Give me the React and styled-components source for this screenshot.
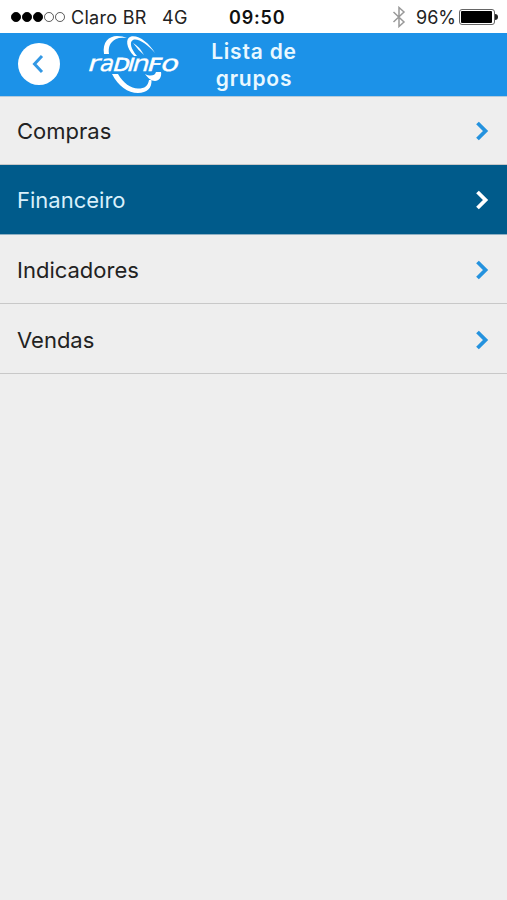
import styled, { createGlobalStyle } from "styled-components";

const groups = [
  { name: "Compras" },
  { name: "Financeiro", active: true },
  { name: "Indicadores" },
  { name: "Vendas" },
];

// the wordmark mixes small and capital letters of one height
const letters = [
  { char: "r", x: 0, width: 12 },
  { char: "a", x: 12, width: 14 },
  { char: "D", x: 25.5, width: 16, cap: true },
  { char: "I", x: 40, width: 6, cap: true },
  { char: "n", x: 44.5, width: 17 },
  { char: "F", x: 60, width: 13.5, cap: true },
  { char: "o", x: 73, width: 18 },
];

const Logo = () => (
  <LogoSvg viewBox="0 0 105 63" aria-label="radinfo">
    <g fill="#fff">
      <path d="M24 21 C22 9 29 3 37 3 Q43 3 47 5 Q40 4 36 6 C30 9 28 14 29 21 Z" />
      <path d="M54 23 C46 15 45 5 51 3.5 C59 2 69 10 75 20 C67 11 58 5 53 7 C49 9 51 16 57 23 Z" />
      <path d="M53 10 Q59 13 64 22 Q58 17 53 10 Z" />
      <path d="M32 41 L38 41 C43 50 51 55.500 58 55.500 C65 55.500 68 53 69 47 L71.500 47 C72 55 67 60 58 60 C48 60 38 53 32 41 Z" />
      <path d="M65 41 C70 43.500 75 43 76 39 L81 39 C82 44 79 48 75 48 C71 48 68 45 65 41 Z" />
    </g>
    <g transform="translate(6.500 38) skewX(-16)">
      {letters.map(({ char, x, width, cap }) => (
        <LogoText
          key={char}
          x={x}
          y="0"
          $cap={cap}
          textLength={width}
          lengthAdjust="spacingAndGlyphs"
        >
          {char}
        </LogoText>
      ))}
    </g>
  </LogoSvg>
);

const Chevron = () => (
  <svg width="16" height="22" viewBox="0 0 16 22" fill="none">
    <path d="M3.500 3 L11.500 11 L3.500 19" stroke="currentColor" strokeWidth="3.800" />
  </svg>
);

const App = () => {
  return (
    <Screen>
      <GlobalStyle />
      <StatusBar>
        <Signal>
          <Dot $full />
          <Dot $full />
          <Dot $full />
          <Dot />
          <Dot />
        </Signal>
        <Carrier>Claro BR</Carrier>
        <Network>4G</Network>
        <Clock>09:50</Clock>
        <Bluetooth viewBox="0 0 14 22">
          <path d="M1.500 6 L12 16 L7 20.500 V1.500 L12 6 L1.500 16" />
        </Bluetooth>
        <Percent>96%</Percent>
        <Battery>
          <Charge />
        </Battery>
      </StatusBar>
      <Header>
        <BackButton aria-label="Voltar">
          <svg width="14" height="20" viewBox="0 0 14 20" fill="none">
            <path d="M11 2 L3.500 10 L11 18" stroke="currentColor" strokeWidth="3" />
          </svg>
        </BackButton>
        <Logo />
        <Title>Lista de grupos</Title>
      </Header>
      <List>
        {groups.map((group) => (
          <Row key={group.name} $active={group.active}>
            <RowName>{group.name}</RowName>
            <Arrow $active={group.active}>
              <Chevron />
            </Arrow>
          </Row>
        ))}
      </List>
    </Screen>
  );
};

export default App;

const GlobalStyle = createGlobalStyle`
  * {
    box-sizing: border-box;
  }
  body {
    margin: 0;
    background: #eeeeee;
    font-family: Inter, "Liberation Sans", sans-serif;
  }
`;

const Screen = styled.div`
  width: 100%;
  min-height: 100vh;
  background: #eeeeee;
`;

const StatusBar = styled.div`
  display: flex;
  align-items: center;
  height: 33px;
  padding: 1px 9px 0 11px;
  background: #fff;
  color: #222;
  font-size: 18px;
  white-space: nowrap;
`;

const Signal = styled.div`
  display: flex;
  gap: 1.2px;
  width: 60px;
`;

const Dot = styled.span`
  width: 9.8px;
  height: 9.8px;
  border-radius: 50%;
  border: 1px solid ${({ $full }) => ($full ? "#000" : "#555")};
  background: ${({ $full }) => ($full ? "#000" : "transparent")};
`;

const Carrier = styled.span`
  width: 91px;
  letter-spacing: 0.3px;
`;

const Network = styled.span`
  width: 67px;
  letter-spacing: 0.3px;
`;

const Clock = styled.span`
  color: #111;
  font-weight: 600;
  letter-spacing: 0.8px;
`;

const Bluetooth = styled.svg`
  width: 14px;
  height: 22px;
  margin-left: auto;
  margin-right: 10px;
  fill: none;
  stroke: #999;
  stroke-width: 1.5;
`;

const Percent = styled.span`
  width: 43px;
`;

const Battery = styled.div`
  position: relative;
  width: 36px;
  height: 16px;
  margin-right: 3px;
  padding: 1px;
  border: 1px solid #666;
  border-radius: 3px;
  &::after {
    content: "";
    position: absolute;
    right: -4px;
    top: 4px;
    width: 3px;
    height: 6px;
    border-radius: 0 3px 3px 0;
    background: #222;
  }
`;

const Charge = styled.div`
  width: 96%;
  height: 100%;
  border-radius: 1px;
  background: #000;
`;

const Header = styled.header`
  display: flex;
  align-items: center;
  height: 64px;
  padding-left: 18px;
  border-bottom: 1px solid #b5cbdc;
  background: #1c92e8;
`;

const BackButton = styled.button`
  display: flex;
  align-items: center;
  justify-content: center;
  width: 42px;
  height: 42px;
  margin-bottom: 1px;
  padding: 0 2px 0 0;
  border: none;
  border-radius: 50%;
  background: #fff;
  color: #3398e4;
`;

const LogoSvg = styled.svg`
  width: 105px;
  height: 63px;
  margin-left: 20px;
`;

const LogoText = styled.text`
  fill: #fff;
  stroke: #fff;
  stroke-width: ${({ $cap }) => ($cap ? 0.7 : 0.3)};
  font-family: "DejaVu Sans", sans-serif;
  font-size: ${({ $cap }) => ($cap ? "18px" : "22.5px")};
`;

const Title = styled.h1`
  width: 100px;
  margin: 0 0 0 19px;
  color: #e9f8ff;
  font-size: 21px;
  font-weight: 600;
  line-height: 27px;
  letter-spacing: 0.8px;
  text-align: center;
`;

const List = styled.ul`
  margin: 0;
  padding: 0;
  list-style: none;
`;

const Row = styled.li`
  display: flex;
  align-items: center;
  justify-content: space-between;
  height: 69.6px;
  padding: 2px 17px 0;
  border-bottom: 1px solid ${({ $active }) => ($active ? "#8fb0c3" : "#c8c8c8")};
  background: ${({ $active }) => ($active ? "#005b8b" : "#eeeeee")};
  color: ${({ $active }) => ($active ? "#d9f0fb" : "#222")};
  &:first-child {
    height: 68.2px;
    padding-top: 0;
  }
`;

const RowName = styled.span`
  font-size: 22px;
`;

const Arrow = styled.span`
  display: flex;
  color: ${({ $active }) => ($active ? "#fff" : "#2492de")};
`;
